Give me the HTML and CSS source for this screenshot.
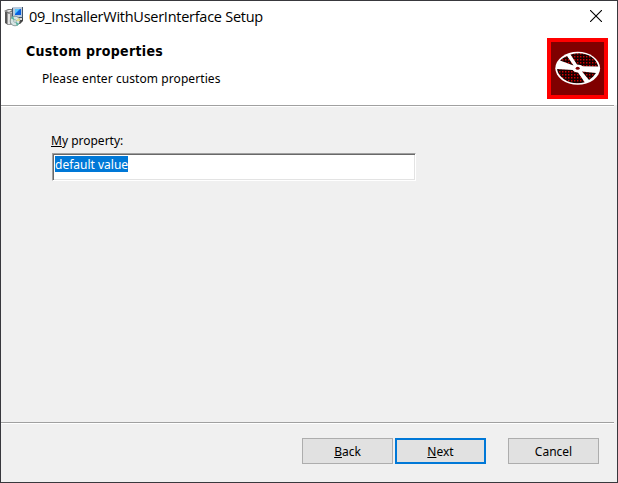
FILE: index.html
```html
<!DOCTYPE html>
<html lang="en">
<head>
<meta charset="utf-8">
<title>09_InstallerWithUserInterface Setup</title>
<link rel="stylesheet" href="styles.css">
</head>
<body>
<main class="window">
  <header class="titlebar">
    <svg class="app-icon" width="20" height="21" viewBox="0 0 20 21">
      <path d="M1 6l3-1v14l-3-2z" fill="#555"/>
      <path d="M3 7h6v12H3z" fill="#999"/>
      <path d="M4 8h2v10H4z" fill="#e5e5e5"/>
      <path d="M0 5l4-2h5l1 3-6 1z" fill="#777"/>
      <path d="M2 5l3-1h3L5 6z" fill="#eee"/>
      <path d="M8 2l2-1h9v11l-2 1H8z" fill="#46576a"/>
      <path d="M9 1h9v10H9z" fill="#b9c9dc"/>
      <path d="M11 3h6v6h-6z" fill="#075ee0"/>
      <path d="M11 3h5l-5 5z" fill="#55c5ff"/>
      <path d="M13 12h6v3l-3 3h-4z" fill="#444"/>
      <path d="M14 12h4v2h-4z" fill="#ddd"/>
      <ellipse cx="11" cy="15" rx="4.8" ry="4.8" fill="#d8e4e3" stroke="#788" stroke-width=".8"/>
      <path d="M11 15l-4-3 2-2zM11 15l4 3-2 2z" fill="#58b5a1"/>
      <path d="M11 15l4-3 1 3z" fill="#e5df8c"/>
      <circle cx="11" cy="15" r="1.3" fill="#fff" stroke="#688" stroke-width=".6"/>
    </svg>
    <h1 class="title">09_InstallerWithUserInterface Setup</h1>
    <svg class="close" width="12" height="12" viewBox="0 0 12 12"><path d="M0 0l12 12M12 0L0 12" stroke="#000" stroke-width="1.1"/></svg>
  </header>
  <section class="banner">
    <div class="heading">
      <h2 class="subtitle">Custom properties</h2>
      <p class="description">Please enter custom properties</p>
    </div>
    <svg class="disc" width="61" height="61" viewBox="0 0 61 61">
      <defs>
        <pattern id="dots" width="3" height="3" patternUnits="userSpaceOnUse"><path d="M0 0h3v3H0z" fill="#180000"/><path d="M0 0h1.4v1.4H0z" fill="#d00000"/></pattern>
      </defs>
      <path d="M0 0h61v61H0z" fill="#f00"/>
      <path d="M4 4h53v53H4z" fill="#800000"/>
      <ellipse cx="30.7" cy="30.3" rx="22.4" ry="16.5" fill="#fff"/>
      <g fill="url(#dots)">
        <path d="M23.5 16.5C36 12.5 49 18 51.3 28.5L36 28.3Q34 26.5 30 26.5z"/>
        <path d="M10 31L25.7 32Q27 34.3 31 34.5L37.7 44.2C25 48 11.5 41 10 31z"/>
        <path d="M13 22.5Q16 19.5 20 18L26.5 27.5z"/>
        <path d="M35 33.5L49 35Q46.5 39 42 42z"/>
      </g>
      <ellipse cx="30.7" cy="30.3" rx="2" ry="1.5" fill="#800000"/>
    </svg>
  </section>
  <div class="rule"></div>
  <section class="content">
    <label class="label" for="property"><u>M</u>y property:</label>
    <div class="field" id="property"><span class="selection">default value</span></div>
  </section>
  <div class="rule"></div>
  <footer class="actions">
    <button class="button"><span><u>B</u>ack</span></button>
    <button class="button primary"><span><u>N</u>ext</span></button>
    <button class="button cancel"><span>Cancel</span></button>
  </footer>
</main>
</body>
</html>
```
FILE: styles.css
```css
* { box-sizing: border-box; }
body { margin: 0; }
.window {
  width: 618px;
  height: 483px;
  border: 1px solid #38383d;
  background: #f0f0f0;
  color: #000;
  display: flex;
  flex-direction: column;
  font: 12px/16px "Noto Sans", sans-serif;
  overflow: hidden;
}
h1, h2, p { margin: 0; font-weight: normal; }
.titlebar {
  height: 32px;
  background: #fff;
  display: flex;
  align-items: flex-start;
  padding: 5px 15px 0 3px;
}
.app-icon { flex: none; }
.title {
  font: 14.5px/20px "Open Sans", sans-serif;
  letter-spacing: -0.26px;
  margin: 1px auto 0 5px;
  white-space: nowrap;
}
.close { margin-top: 4px; }
.banner {
  height: 72px;
  background: #fff;
  display: flex;
  justify-content: space-between;
  padding: 5px 9px 0 25px;
}
.heading { padding-top: 4px; }
.subtitle {
  font: bold 14px/18px "DejaVu Sans Condensed", "DejaVu Sans", sans-serif;
  font-stretch: condensed;
  letter-spacing: 0.3px;
}
.description { margin: 11px 0 0 16px; letter-spacing: 0.08px; }
.rule {
  flex: none;
  height: 2px;
  width: 613px;
  border-top: 1px solid #a0a0a0;
  border-bottom: 1px solid #fff;
}
.content { height: 315px; padding: 26px 0 0 50px; }
.label { display: block; margin-bottom: 4px; }
.field {
  width: 364px;
  height: 28px;
  margin-left: 1px;
  background: #fff;
  border: 1px solid;
  border-color: #a0a0a0 #fff #fff #a0a0a0;
  box-shadow: inset 1px 1px #696969, inset -1px -1px #e3e3e3;
  padding: 2px;
}
.selection {
  display: block;
  width: 73px;
  height: 16px;
  line-height: 18px;
  white-space: nowrap;
  background: #0078d7;
  color: #fff;
}
.actions { display: flex; padding: 14px 0 0 301px; }
.button {
  width: 91px;
  height: 26px;
  border: 1px solid #adadad;
  background: #e1e1e1;
  color: #000;
  font: inherit;
  padding: 2px 0 0;
  margin-right: 2px;
}
.primary { border: 2px solid #0078d7; }
.cancel { margin-left: 20px; }
```
